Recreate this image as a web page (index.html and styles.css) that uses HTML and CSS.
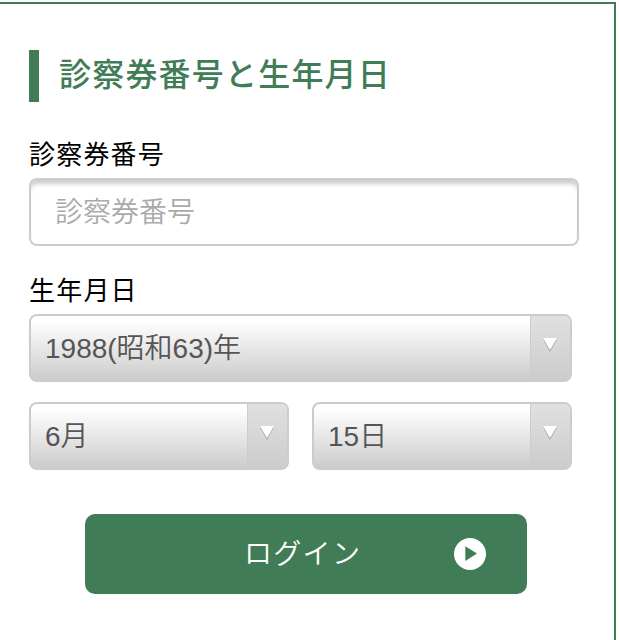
FILE: index.html
```html
<!DOCTYPE html>
<html lang="ja">
<head>
    <meta charset="UTF-8">
    <title>ログイン</title>
    <link rel="stylesheet" href="styles.css">
</head>
<body>
    <div class="login-container">
        <h2 class="title">診察券番号と生年月日</h2>

        <form class="login-form">
            <label class="label" for="cardNumber">診察券番号</label>
            <input class="text-input" type="text" id="cardNumber" placeholder="診察券番号">

            <label class="label label-birth" for="birthYear">生年月日</label>
            <div class="select-box">
                <select id="birthYear">
                    <option>1988(昭和63)年</option>
                </select>
                <span class="arrow">
                    <svg width="16" height="16" viewBox="0 0 16 16">
                        <path d="M1 2.2H15L8 15Z" fill="#aaa"/>
                        <path d="M1 1H15L8 13Z" fill="#fff"/>
                    </svg>
                </span>
            </div>
            <div class="select-row">
                <div class="select-box">
                    <select id="birthMonth">
                        <option>6月</option>
                    </select>
                    <span class="arrow">
                        <svg width="16" height="16" viewBox="0 0 16 16">
                            <path d="M1 2.2H15L8 15Z" fill="#aaa"/>
                            <path d="M1 1H15L8 13Z" fill="#fff"/>
                        </svg>
                    </span>
                </div>
                <div class="select-box">
                    <select id="birthDay">
                        <option>15日</option>
                    </select>
                    <span class="arrow">
                        <svg width="16" height="16" viewBox="0 0 16 16">
                            <path d="M1 2.2H15L8 15Z" fill="#aaa"/>
                            <path d="M1 1H15L8 13Z" fill="#fff"/>
                        </svg>
                    </span>
                </div>
            </div>

            <button class="login-button" type="button">
                <span class="button-text">ログイン</span>
                <svg width="32" height="32" viewBox="0 0 32 32">
                    <circle cx="16" cy="16" r="16" fill="#fff"/>
                    <path d="M11.3 8.3V23L23 15.6Z" fill="#407c55"/>
                </svg>
            </button>
        </form>
    </div>
</body>
</html>
```
FILE: styles.css
```css
* {
    box-sizing: border-box;
}
body {
    margin: 0;
    padding-top: 2px;
    background-color: #fff;
    color: #000;
    font-family: "Liberation Sans", "Noto Sans CJK JP", sans-serif;
    overflow: hidden;
}
.login-container {
    width: 616px;
    height: 660px;
    padding: 46px 0 0 29px;
    border-top: 2px solid #407c55;
    border-right: 2px solid #407c55;
}
.title {
    height: 52px;
    margin: 0 0 36px;
    padding-left: 20px;
    border-left: 10px solid #407c55;
    color: #407c55;
    font-size: 32px;
    font-weight: 500;
    line-height: 51px;
    letter-spacing: 1.2px;
}
.label {
    display: block;
    height: 32px;
    margin-bottom: 8px;
    font-size: 26px;
    line-height: 34px;
    letter-spacing: 1.2px;
}
.label-birth {
    margin-top: 28px;
}
.text-input {
    display: block;
    width: 550px;
    height: 68px;
    padding: 2px 24px 0;
    border: 2px solid #ccc;
    border-radius: 8px;
    box-shadow: inset 0 6px 4px -2px #ccc;
    background-color: #fff;
    font-family: inherit;
    font-size: 28px;
    font-weight: 350;
}
.text-input::placeholder {
    color: #aaa;
}
.select-box {
    display: flex;
    width: 543px;
    height: 68px;
    border: 2px solid #ccc;
    border-radius: 8px;
    background: linear-gradient(#fff 0%, #fff 8%, #ccc 100%);
    overflow: hidden;
}
.select-box select {
    flex: 1;
    min-width: 0;
    padding: 0 14px;
    border: none;
    background: none;
    color: #555;
    font-family: inherit;
    font-size: 28px;
    font-weight: 350;
    appearance: none;
}
.arrow {
    display: flex;
    width: 40px;
    padding: 21px 0 0 11px;
    border-left: 1px solid #ccc;
    background: linear-gradient(#e0e0e0, #ccc);
}
.select-row {
    display: flex;
    gap: 23px;
    width: 543px;
    margin-top: 20px;
}
.select-row .select-box {
    width: 260px;
}
.login-button {
    display: flex;
    justify-content: flex-end;
    align-items: center;
    width: 442px;
    height: 80px;
    margin: 44px 0 0 56px;
    padding: 0 41px 0 0;
    border: none;
    border-radius: 10px;
    background-color: #407c55;
    color: #fff;
    font-family: inherit;
    font-size: 28px;
    cursor: pointer;
}
.button-text {
    width: 210px;
    padding-bottom: 5px;
    text-align: left;
    font-weight: 350;
    letter-spacing: 1.3px;
}
```
